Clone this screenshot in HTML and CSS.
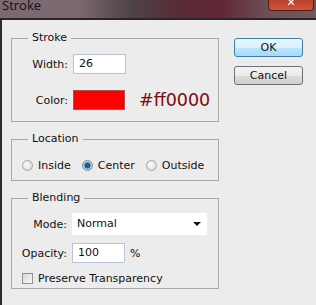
FILE: index.html
```html
<!DOCTYPE html>
<html lang="en">
<head>
  <meta charset="UTF-8" />
  <title>Stroke</title>
  <link rel="stylesheet" href="styles.css">
</head>
<body>
  <div class="window">
    <div class="titlebar">
      <span class="title">Stroke</span>
      <span class="close">✕</span>
    </div>

    <div class="client">
      <div class="main">
        <fieldset class="group stroke">
          <legend>Stroke</legend>
          <div class="row">
            <label class="lbl">Width:</label>
            <span class="field small">26</span>
          </div>
          <div class="row color-row">
            <label class="lbl">Color:</label>
            <span class="swatch"></span>
            <span class="hex">#ff0000</span>
          </div>
        </fieldset>

        <fieldset class="group location">
          <legend>Location</legend>
          <div class="radios">
            <span class="radio"><span class="dot"></span>Inside</span>
            <span class="radio on"><span class="dot"></span>Center</span>
            <span class="radio"><span class="dot"></span>Outside</span>
          </div>
        </fieldset>

        <fieldset class="group blending">
          <legend>Blending</legend>
          <div class="row">
            <label class="lbl">Mode:</label>
            <span class="field select">Normal<span class="arrow"></span></span>
          </div>
          <div class="row">
            <label class="lbl">Opacity:</label>
            <span class="field small">100</span>
            <span class="unit">%</span>
          </div>
          <div class="check-row">
            <span class="check"></span>Preserve Transparency
          </div>
        </fieldset>
      </div>

      <div class="buttons">
        <button class="btn default">OK</button>
        <button class="btn">Cancel</button>
      </div>
    </div>
  </div>
</body>
</html>
```

FILE: styles.css
```css
* {
  margin: 0;
  padding: 0;
  box-sizing: border-box;
}

body {
  width: 316px;
  height: 305px;
  overflow: hidden;
  font-family: "DejaVu Sans", Tahoma, sans-serif;
  font-size: 11px;
  color: #111;
  background: #ececec;
}

.window {
  height: 305px;
  display: flex;
  flex-direction: column;
}

/* aero glass title */
.titlebar {
  height: 20px;
  flex: none;
  display: flex;
  justify-content: space-between;
  background: linear-gradient(90deg, #7a6a72 0%, #7d6870 25%, #4c4246 42%, #5a2a34 58%, #612634 70%, #6e5058 85%, #6a5a60 100%);
  border-bottom: 2px solid #2a2426;
}

.title {
  font-family: "Open Sans", "DejaVu Sans", sans-serif;
  font-size: 13px;
  line-height: 14px;
  margin-top: -2px;
  padding-left: 2px;
  color: #111;
}

.close {
  width: 46px;
  height: 11px;
  margin-right: 2px;
  border: 1px solid #5a1a10;
  border-top: none;
  border-radius: 0 0 4px 4px;
  background: linear-gradient(#b8402c, #d0553a);
  color: #fff;
  font-size: 11px;
  line-height: 6px;
  text-align: center;
  overflow: hidden;
}

.client {
  flex: 1;
  display: flex;
  border-left: 2px solid #2c2a2b;
  padding-left: 9px;
}

.main {
  width: 208px;
  display: flex;
  flex-direction: column;
  gap: 10px;
  padding-top: 11px;
}

.group {
  border: 1px solid #a9a9a9;
}

.group legend {
  margin-left: 16px;
  padding: 0 4px;
  line-height: 14px;
  font-size: 11px;
}

.row {
  display: flex;
  align-items: center;
}

.lbl {
  width: 61px;
  text-align: right;
  padding-right: 5px;
}

.stroke {
  height: 91px;
  padding-top: 9px;
}

.stroke .row + .row {
  margin-top: 16px;
}

.field {
  background: #fff;
  height: 20px;
  line-height: 20px;
  padding-left: 5px;
}

.small {
  width: 53px;
  border: 1px solid #b6c4d4;
  line-height: 18px;
}

.swatch {
  width: 52px;
  height: 20px;
  background: #ff0000;
  border: 1px solid #b05050;
}

.hex {
  margin-left: 14px;
  font-size: 17.5px;
  color: #7a0a0a;
}

.location {
  height: 49px;
}

.radios {
  display: flex;
  gap: 11px;
  padding: 13px 0 0 10px;
}

.radio {
  display: flex;
  align-items: center;
  gap: 5px;
}

.dot {
  width: 11px;
  height: 11px;
  border-radius: 50%;
  border: 1px solid #a3a3a3;
  background: radial-gradient(circle at 40% 40%, #fdfdfd, #d2d2d2);
}

.radio.on .dot {
  border-color: #6f8aa2;
  background: radial-gradient(circle, #1e5e86 0 2.5px, #9bc4de 3.5px, #e8eef4 5px);
}

.blending {
  height: 98px;
  padding-top: 8px;
}

.blending .lbl {
  width: 60px;
}

.blending .row + .row {
  margin-top: 8px;
}

.select {
  width: 135px;
  height: 22px;
  line-height: 22px;
  position: relative;
}

.arrow {
  position: absolute;
  right: 6px;
  top: 9px;
  border-left: 4px solid transparent;
  border-right: 4px solid transparent;
  border-top: 4px solid #111;
}

.unit {
  margin-left: 5px;
}

.check-row {
  display: flex;
  align-items: center;
  gap: 5px;
  margin: 9px 0 0 10px;
}

.check {
  width: 11px;
  height: 11px;
  border: 1px solid #8f8f8f;
  background: linear-gradient(135deg, #d8d8d8, #f8f8f8);
}

.buttons {
  display: flex;
  flex-direction: column;
  gap: 9px;
  padding: 18px 0 0 15px;
}

.btn {
  width: 69px;
  height: 19px;
  font-family: "DejaVu Sans", Tahoma, sans-serif;
  font-size: 11px;
  color: #111;
  border: 1px solid #707070;
  border-radius: 3px;
  background: linear-gradient(#f2f2f2 0%, #ebebeb 50%, #dddddd 51%, #cfcfcf 100%);
}

.btn.default {
  border-color: #3c7fb1;
  background: linear-gradient(#eaf6fd 0%, #d9f0fc 50%, #bee6fd 51%, #a7d9f5 100%);
}
```
